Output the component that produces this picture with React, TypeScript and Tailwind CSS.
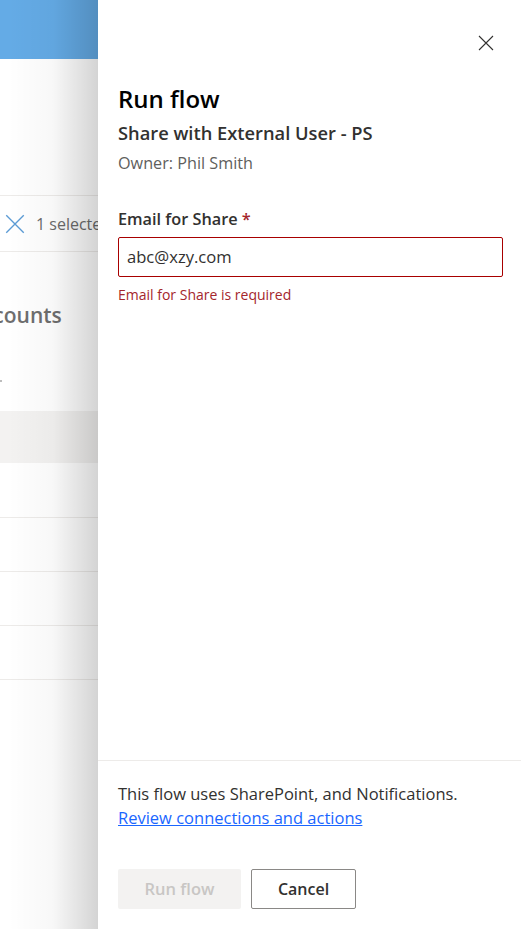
import React from 'react'

const FONT = "font-['Open_Sans','Noto_Sans',sans-serif]"

function CloseIcon({ size = 16, className = '' }: { size?: number; className?: string }) {
  return (
    <svg width={size} height={size} viewBox="0 0 16 16" className={className} fill="none">
      <path d="M1 1L15 15M15 1L1 15" stroke="currentColor" strokeWidth="1.1" />
    </svg>
  )
}

// ── Page behind the panel (only a sliver of it is visible) ──

function BackgroundPage() {
  return (
    <div className="w-full h-full bg-white">
      <div className="h-[59px] bg-[#64abe6]" />
      <div className="h-[136px]" />
      <div className="h-[57px] border-y border-[#edebe9] flex items-center gap-[11px] pl-[5px]">
        <CloseIcon size={20} className="text-[#5b9bd5]" />
        <span className="text-[16px] text-[#6b6b6b] whitespace-nowrap">1 selected</span>
      </div>
      <div className="h-[49px]" />
      <div className="text-[21px] font-semibold text-[#6e6e6e] whitespace-nowrap -ml-[31px] leading-[28px]">Accounts</div>
      <div className="h-[82px] relative">
        <span className="absolute left-0 top-[51px] w-[2px] h-[2px] bg-[#bdbdbd]" />
      </div>
      <div className="h-[52px] bg-[#f3f2f1]" />
      <div className="h-[55px] border-b border-[#edebe9]" />
      <div className="h-[54px] border-b border-[#edebe9]" />
      <div className="h-[54px] border-b border-[#edebe9]" />
      <div className="h-[54px] border-b border-[#edebe9]" />
    </div>
  )
}

export default function App() {
  return (
    <div className={`relative w-[521px] h-[929px] overflow-hidden bg-white ${FONT}`}>
      <BackgroundPage />

      {/* Shadow cast by the side panel */}
      <div className="absolute top-0 bottom-0 left-[8px] w-[90px] bg-gradient-to-r from-transparent via-black/[0.03] to-black/[0.17]" />

      {/* Run flow panel */}
      <div className="absolute top-0 bottom-0 left-[98px] right-0 bg-white flex flex-col">
        <div className="flex justify-end pt-[35px] pr-[27px]">
          <button className="text-[#323130]"><CloseIcon size={16} /></button>
        </div>

        <div className="flex-1 pl-[20px] pr-[18px]">
          <h1 className="mt-[33px] text-[24px] leading-[30px] font-semibold text-[#000000]">Run flow</h1>
          <p className="mt-[7px] text-[18.3px] leading-[24px] font-semibold text-[#323130]">Share with External User - PS</p>
          <p className="mt-[8px] text-[16.2px] leading-[20px] text-[#605e5c]">Owner: Phil Smith</p>

          <label className="block mt-[35px] text-[16.3px] leading-[22px] font-semibold text-[#323130]">
            Email for Share <span className="text-[#a4262c]">*</span>
          </label>
          <div className="mt-[7px] h-[40px] border border-[#a80000] rounded-[2px] flex items-center px-[8px]">
            <span className="text-[16.6px] text-[#323130]">abc@xzy.com</span>
          </div>
          <p className="mt-[9px] text-[14px] leading-[18px] text-[#a4262c]">Email for Share is required</p>
        </div>

        <div className="h-[169px] border-t border-[#edebe9] px-[20px] pt-[21px]">
          <p className="text-[16.5px] leading-[24px] text-[#323130]">This flow uses SharePoint, and Notifications.</p>
          <a className="text-[16.5px] leading-[24px] text-[#1a66ff] underline">Review connections and actions</a>
          <div className="mt-[39px] flex gap-[10px]">
            <button className="w-[123px] h-[40px] rounded-[2px] bg-[#f3f2f1] text-[16.5px] font-semibold text-[#c8c6c4]">Run flow</button>
            <button className="w-[105px] h-[40px] rounded-[2px] border border-[#8a8886] bg-white text-[16px] font-semibold text-[#323130]">Cancel</button>
          </div>
        </div>
      </div>
    </div>
  )
}
